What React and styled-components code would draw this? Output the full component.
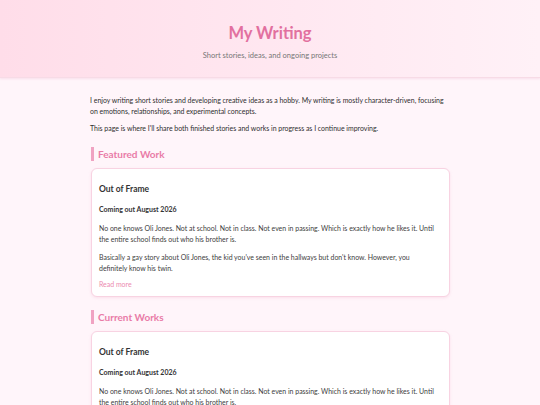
import React from 'react'
import styled, { createGlobalStyle } from 'styled-components'

const GlobalStyle = createGlobalStyle`
	html, body {
		margin: 0;
		padding: 0;
		background: #fff5fa;
	}
	body {
		font-family: 'Trebuchet MS', Lato, 'Open Sans', sans-serif;
		color: #333;
	}
	* {
		box-sizing: border-box;
	}
`

const Header = styled.header`
	background: linear-gradient(90deg, #ffdde9 0%, #ffe8f1 55%, #fff1f7 100%);
	border-bottom: 1px solid #f7dbe6;
	box-shadow: 0 1px 2px rgba(230, 160, 190, 0.25);
	text-align: center;
	padding: 22px 0 16px;
`

const Title = styled.h1`
	margin: 0;
	font-size: 16.5px;
	line-height: 22px;
	font-weight: 700;
	color: #e2709f;
`

const Subtitle = styled.p`
	margin: 6px 0 0;
	font-size: 7.5px;
	line-height: 11px;
	color: #777;
`

const Main = styled.main`
	max-width: 360px;
	margin: 0 auto;
	padding: 17px 0 20px;
`

const Text = styled.p`
	margin: ${p => p.$gap || 0}px 0 0;
	font-size: 6.95px;
	line-height: 11px;
	color: ${p => p.$muted ? '#3d3d3d' : '#2e2e2e'};
`

const SectionTitle = styled.h2`
	margin: ${p => p.$top}px 0 0 1px;
	padding-left: 4px;
	border-left: 3px solid #f0a3c2;
	font-size: 10px;
	line-height: 14px;
	font-weight: 700;
	color: #e97ba7;
`

const Card = styled.article`
	margin: 7px 0 0 1px;
	background: #fff;
	border: 1px solid #f8d3e2;
	border-radius: 6px;
	box-shadow: 0 1px 3px rgba(232, 150, 185, 0.22);
	padding: 14px 11px 6px 7px;
`

const CardTitle = styled.h3`
	margin: 0;
	font-size: 8.5px;
	line-height: 12px;
	font-weight: 700;
	color: #333;
`

const Release = styled.h4`
	margin: 9px 0 0;
	font-size: 7px;
	line-height: 11px;
	font-weight: 700;
	color: #333;
`

const ReadMore = styled.a`
	display: block;
	margin-top: 5px;
	font-size: 6.95px;
	line-height: 11px;
	color: #ec8ab0;
	text-decoration: none;
`

const WorkCard = ({ more }) => (
	<Card>
		<CardTitle>Out of Frame</CardTitle>
		<Release>Coming out August 2026</Release>
		<Text $gap={8} $muted>
			No one knows Oli Jones. Not at school. Not in class. Not even in passing. Which is exactly how he likes it. Until the entire school finds out who his brother is.
		</Text>
		<Text $gap={7} $muted>
			Basically a gay story about Oli Jones, the kid you've seen in the hallways but don't know. However, you definitely know his twin.
		</Text>
		{more && <ReadMore href="#">Read more</ReadMore>}
	</Card>
)

export default function App() {
	return (
		<>
			<GlobalStyle />
			<Header>
				<Title>My Writing</Title>
				<Subtitle>Short stories, ideas, and ongoing projects</Subtitle>
			</Header>
			<Main>
				<Text>
					I enjoy writing short stories and developing creative ideas as a hobby. My writing is mostly character-driven, focusing on emotions, relationships, and experimental concepts.
				</Text>
				<Text $gap={6}>
					This page is where I'll share both finished stories and works in progress as I continue improving.
				</Text>
				<SectionTitle $top={13}>Featured Work</SectionTitle>
				<WorkCard more />
				<SectionTitle $top={13}>Current Works</SectionTitle>
				<WorkCard more />
			</Main>
		</>
	)
}
